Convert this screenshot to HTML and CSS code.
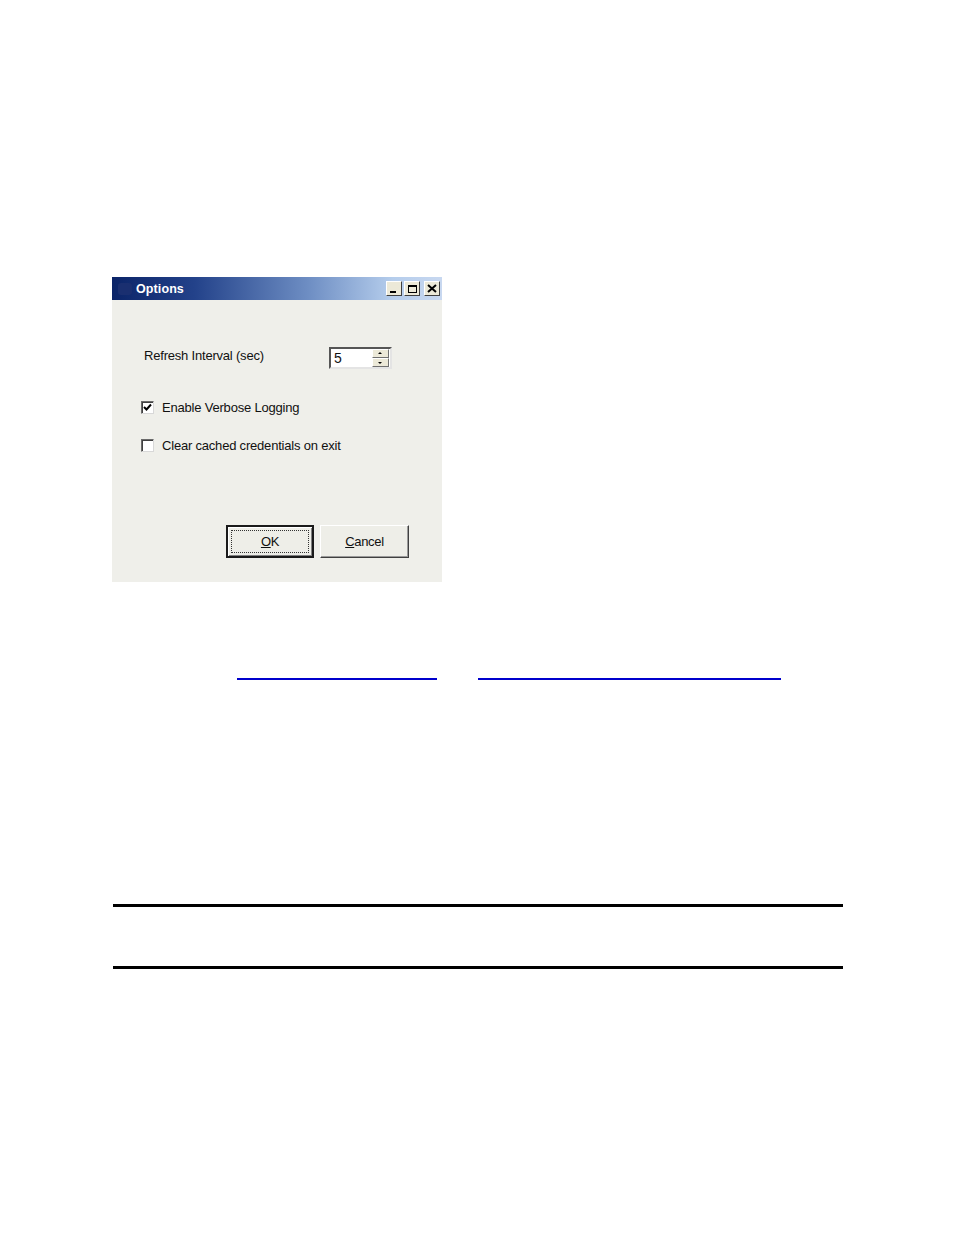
FILE: index.html
```html
<!DOCTYPE html>
<html>
<head>
<meta charset="utf-8">
<title>Options</title>
<link rel="stylesheet" href="styles.css">
</head>
<body>
<div class="page">
  <div class="dialog">
    <div class="titlebar">
      <span class="appicon"></span>
      <span class="title">Options</span>
      <div class="tbtns">
        <span class="tbtn"><span class="min"></span></span>
        <span class="tbtn"><span class="max"></span></span>
        <span class="tbtn close">
          <svg width="10" height="9" viewBox="0 0 10 9"><path d="M1 1 L9 8 M9 1 L1 8" stroke="#000" stroke-width="2"/></svg>
        </span>
      </div>
    </div>
    <div class="dbody">
      <div class="row refresh">
        <span class="label">Refresh Interval (sec)</span>
        <div class="spin">
          <span class="spinval">5</span>
          <div class="arrows">
            <span class="arrow up"></span>
            <span class="arrow down"></span>
          </div>
        </div>
      </div>
      <div class="row check first">
        <span class="box">
          <svg width="9" height="9" viewBox="0 0 9 9"><path d="M1 4 L3.5 6.5 L8 1.5" fill="none" stroke="#000" stroke-width="2"/></svg>
        </span>
        <span class="label">Enable Verbose Logging</span>
      </div>
      <div class="row check">
        <span class="box"></span>
        <span class="label">Clear cached credentials on exit</span>
      </div>
      <div class="buttons">
        <button class="btn default"><span class="focus"><u>O</u>K</span></button>
        <button class="btn"><span><u>C</u>ancel</span></button>
      </div>
    </div>
  </div>
  <div class="links">
    <a class="link l1" href="#">&nbsp;</a>
    <a class="link l2" href="#">&nbsp;</a>
  </div>
  <div class="rule r1"></div>
  <div class="rule r2"></div>
</div>
</body>
</html>
```
FILE: styles.css
```css
html, body {
  margin: 0;
  padding: 0;
  background: #fff;
}
.page {
  padding-top: 277px;
  width: 954px;
  height: 1235px;
  box-sizing: border-box;
}
.dialog {
  margin-left: 112px;
  width: 330px;
  height: 305px;
  background: #efefea;
  display: flex;
  flex-direction: column;
  font-family: "Liberation Sans", Arial, sans-serif;
}
.titlebar {
  height: 23px;
  background: linear-gradient(to right, #0b2468 0%, #23428a 25%, #6f8fc4 60%, #b5cdec 85%, #c8d8f0 100%);
  display: flex;
  align-items: center;
  padding-left: 6px;
}
.appicon {
  width: 14px;
  height: 12px;
  background: #1a2f70;
  border-radius: 3px;
  margin-right: 4px;
}
.title {
  color: #fff;
  font-weight: bold;
  font-size: 12.5px;
  letter-spacing: 0.1px;
  flex: 1;
}
.tbtns {
  display: flex;
  gap: 2px;
  margin-right: 2px;
}
.tbtn {
  width: 16px;
  height: 15px;
  background: #ece9d8;
  border: 1px solid;
  border-color: #fff #404040 #404040 #fff;
  box-sizing: border-box;
  display: flex;
  align-items: center;
  justify-content: center;
}
.tbtn.close {
  margin-left: 2px;
}
.min {
  width: 6px;
  height: 2px;
  background: #000;
  margin-top: 7px;
  margin-right: 3px;
}
.max {
  width: 9px;
  height: 8px;
  border: 1px solid #000;
  border-top-width: 2px;
  box-sizing: border-box;
}
.dbody {
  flex: 1;
  display: flex;
  flex-direction: column;
  font-size: 13px;
  color: #111;
}
.label {
  letter-spacing: -0.2px;
}
.row {
  display: flex;
  align-items: center;
}
.refresh {
  margin-top: 47px;
  padding-left: 32px;
  height: 22px;
}
.refresh .label {
  width: 185px;
  margin-top: -5px;
}
.spin {
  width: 63px;
  height: 22px;
  background: #fff;
  border: 2px solid;
  border-color: #555 #e4e4e4 #e4e4e4 #555;
  box-sizing: border-box;
  display: flex;
  align-items: center;
}
.spinval {
  flex: 1;
  padding-left: 3px;
  font-size: 14px;
}
.arrows {
  width: 17px;
  height: 18px;
  display: flex;
  flex-direction: column;
  margin-right: 1px;
}
.arrow {
  flex: 1;
  background: #ece9d8;
  border: 1px solid;
  border-color: #fff #707070 #707070 #fff;
  position: relative;
}
.arrow::after {
  content: "";
  position: absolute;
  left: 5px;
  width: 0;
  height: 0;
  border-left: 2px solid transparent;
  border-right: 2px solid transparent;
}
.arrow.up::after {
  top: 2px;
  border-bottom: 2px solid #000;
}
.arrow.down::after {
  top: 3px;
  border-top: 2px solid #000;
}
.check {
  padding-left: 29px;
  height: 16px;
}
.check.first {
  margin-top: 30px;
}
.check + .check {
  margin-top: 22px;
}
.box {
  width: 13px;
  height: 13px;
  background: #fff;
  border: 1px solid;
  border-color: #6a6a6a #d8d8d8 #d8d8d8 #6a6a6a;
  box-shadow: inset 1px 1px 0 #404040;
  box-sizing: border-box;
  margin-right: 8px;
  display: flex;
  align-items: center;
  justify-content: center;
}
.buttons {
  margin-top: 72px;
  padding-left: 114px;
  display: flex;
  gap: 6px;
}
.btn {
  width: 88px;
  height: 33px;
  background: #eeeee8;
  border: 1px solid;
  border-color: #fff #404040 #404040 #fff;
  box-shadow: inset -1px -1px 0 #9a9a9a;
  font-family: "Liberation Sans", Arial, sans-serif;
  font-size: 13px;
  color: #111;
  padding: 0;
  display: flex;
  align-items: center;
  justify-content: center;
  letter-spacing: -0.3px;
}
.btn.default {
  border: 2px solid #1a1a1a;
  box-shadow: inset 1px 1px 0 #fff, inset -1px -1px 0 #808080;
}
.btn .focus {
  border: 1px dotted #333;
  width: 78px;
  height: 23px;
  box-sizing: border-box;
  display: flex;
  align-items: center;
  justify-content: center;
}
.btn + .btn {
  width: 89px;
}
.links {
  margin-top: 77px;
  padding-left: 237px;
  display: flex;
  gap: 41px;
  height: 20px;
}
.link {
  display: block;
  height: 19px;
  border-bottom: 2px solid #0000cc;
  text-decoration: none;
  color: #0000cc;
  font-family: "Liberation Serif", serif;
}
.l1 { width: 200px; }
.l2 { width: 303px; }
.rule {
  margin-left: 113px;
  width: 730px;
  height: 3px;
  background: #000;
}
.r1 { margin-top: 225px; }
.r2 { margin-top: 59px; }
```
